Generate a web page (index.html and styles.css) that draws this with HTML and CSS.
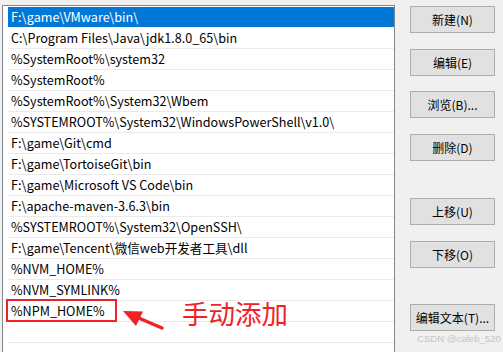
FILE: index.html
```html
<!DOCTYPE html>
<html lang="zh-CN">
<head>
    <meta charset="UTF-8">
    <meta name="viewport" content="width=device-width, initial-scale=1.0">
    <title>编辑环境变量</title>
    <link rel="stylesheet" href="styles.css">
</head>
<body>
    <div class="dialog">
        <ul class="path-list">
            <li class="row selected">F:\game\VMware\bin\</li>
            <li class="row">C:\Program Files\Java\jdk1.8.0_65\bin</li>
            <li class="row">%SystemRoot%\system32</li>
            <li class="row">%SystemRoot%</li>
            <li class="row">%SystemRoot%\System32\Wbem</li>
            <li class="row">%SYSTEMROOT%\System32\WindowsPowerShell\v1.0\</li>
            <li class="row">F:\game\Git\cmd</li>
            <li class="row">F:\game\TortoiseGit\bin</li>
            <li class="row">F:\game\Microsoft VS Code\bin</li>
            <li class="row">F:\apache-maven-3.6.3\bin</li>
            <li class="row">%SYSTEMROOT%\System32\OpenSSH\</li>
            <li class="row">F:\game\Tencent\微信web开发者工具\dll</li>
            <li class="row">%NVM_HOME%</li>
            <li class="row">%NVM_SYMLINK%</li>
            <li class="row">%NPM_HOME%</li>
            <li class="row"></li>
        </ul>
        <div class="actions">
            <div class="group">
                <button class="btn">新建(N)</button>
                <button class="btn">编辑(E)</button>
                <button class="btn">浏览(B)...</button>
                <button class="btn">删除(D)</button>
            </div>
            <div class="group group-move">
                <button class="btn">上移(U)</button>
                <button class="btn">下移(O)</button>
            </div>
            <div class="group group-text">
                <button class="btn">编辑文本(T)...</button>
            </div>
        </div>
    </div>

    <!-- annotation drawn over the screenshot -->
    <div class="mark-box"></div>
    <svg class="mark-arrow" width="60" height="30" viewBox="118 306 60 30">
        <line x1="162" y1="328" x2="134" y2="316" stroke="#ee2227" stroke-width="3.5" stroke-linecap="round"/>
        <polygon points="123,311 143,311.5 136,326" fill="#ee2227"/>
    </svg>
    <div class="mark-text">手动添加</div>
    <div class="watermark">CSDN @caleb_520</div>
</body>
</html>
```

FILE: styles.css
```css
* {
    margin: 0;
    padding: 0;
    box-sizing: border-box;
}
body {
    background-color: #F0F0F0;
    font-family: "Noto Sans CJK SC", "Microsoft YaHei", sans-serif;
    font-size: 12px;
    width: 503px;
    height: 352px;
    overflow: hidden;
    position: relative;
}
.dialog {
    display: flex;
    align-items: flex-start;
    padding: 5px 0 0 2px;
}
.path-list {
    list-style: none;
    width: 393px;
    height: 360px;
    background-color: #FFFFFF;
    border: 1px solid #828790;
    padding: 1px 0 0 5px;
}
.row {
    height: 21px;
    line-height: 20px;
    padding-left: 3px;
    border-bottom: 1px solid #EAEAEA;
    color: #000000;
    font-size: 12.6px;
    white-space: nowrap;
}
.row.selected {
    background-color: #0078D7;
    color: #FFFFFF;
    border-bottom-color: #FFFFFF;
}
.actions {
    margin-left: 15px;
    width: 85px;
    display: flex;
    flex-direction: column;
    padding-top: 1px;
}
.group {
    display: flex;
    flex-direction: column;
    gap: 15.5px;
}
.group-move {
    margin-top: 37.5px;
}
.group-text {
    margin-top: 36.5px;
}
.btn {
    height: 27px;
    background-color: #E1E1E1;
    border: 1px solid #ADADAD;
    font-family: inherit;
    font-size: 12px;
    color: #000000;
}
.mark-box {
    position: absolute;
    left: 6px;
    top: 299px;
    width: 111px;
    height: 23px;
    border: 2px solid #EE2227;
}
.mark-arrow {
    position: absolute;
    left: 118px;
    top: 306px;
}
.mark-text {
    position: absolute;
    left: 182px;
    top: 296px;
    font-size: 26.5px;
    line-height: 34px;
    color: #EE2227;
}
.watermark {
    position: absolute;
    left: 417px;
    top: 333px;
    font-family: "Liberation Sans", Arial, sans-serif;
    font-size: 9.6px;
    color: #C4C4C4;
    white-space: nowrap;
}
```
